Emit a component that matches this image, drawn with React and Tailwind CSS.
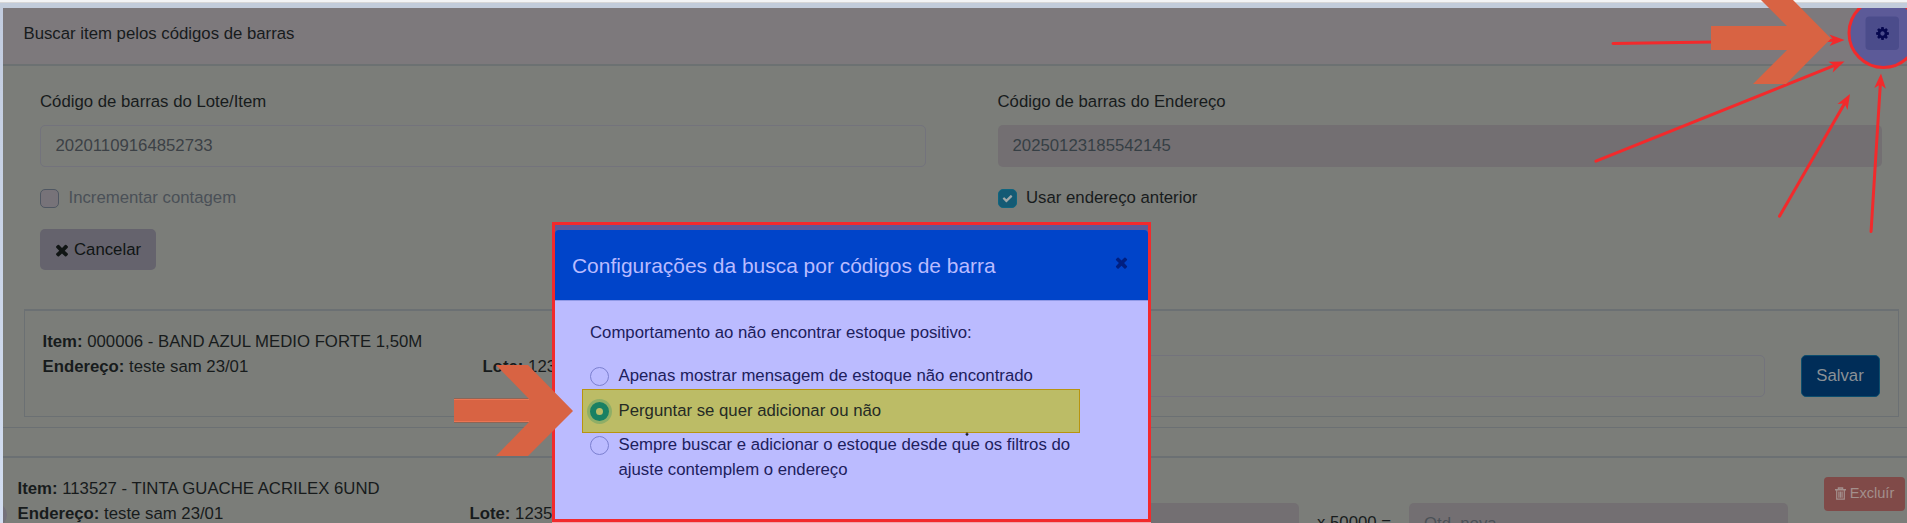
import React from 'react';

const ICONS = {
  times: 'M1490 1322q0 40-28 68l-136 136q-28 28-68 28t-68-28l-294-294-294 294q-28 28-68 28t-68-28l-136-136q-28-28-28-68t28-68l294-294-294-294q-28-28-28-68t28-68l136-136q28-28 68-28t68 28l294 294 294-294q28-28 68-28t68 28l136 136q28 28 28 68t-28 68l-294 294 294 294q28 28 28 68z',
  check: 'M1671 566q0 40-28 68l-724 724-136 136q-28 28-68 28t-68-28l-136-136-362-362q-28-28-28-68t28-68l136-136q28-28 68-28t68 28l294 295 656-657q28-28 68-28t68 28l136 136q28 28 28 68z',
  cog: 'M1152 896q0-106-75-181t-181-75-181 75-75 181 75 181 181 75 181-75 75-181zm512-109v222q0 12-8 23t-20 13l-185 28q-19 54-39 91 35 50 107 138 10 12 10 25t-9 23q-27 37-99 108t-94 71q-12 0-26-9l-138-108q-44 23-91 38-16 136-29 186-7 28-36 28h-222q-14 0-24.5-8.5t-11.5-21.5l-28-184q-49-16-90-37l-141 107q-10 9-25 9-14 0-25-11-126-114-165-168-7-10-7-23 0-12 8-23 15-21 51-66.5t54-70.5q-27-50-41-99l-183-27q-13-2-21-12.5t-8-23.5v-222q0-12 8-23t19-13l186-28q14-46 39-92-40-57-107-138-10-12-10-24 0-10 9-23 26-36 98.5-107.5t94.5-71.5q13 0 26 10l138 107q44-23 91-38 16-136 29-186 7-28 36-28h222q14 0 24.5 8.5t11.5 21.5l28 184q49 16 90 37l142-107q9-9 24-9 13 0 25 10 129 119 165 170 7 8 7 22 0 12-8 23-15 21-51 66.5t-54 70.5q26 50 41 98l183 28q13 2 21 12.5t8 23.5z',
};

const Icon = ({ name, className }) => (
  <svg viewBox="0 0 1792 1792" fill="currentColor" className={className}>
    <path d={ICONS[name]} />
  </svg>
);

const TrashIcon = ({ className }) => (
  <svg viewBox="0 0 11 13" fill="none" stroke="currentColor" className={className}>
    <path d="M0 2.7H11M3.5 2.5V1H7.5V2.5" strokeWidth="1.5" />
    <path d="M1.7 3V12.2H9.3V3M3.9 4.5V10.8M5.5 4.5V10.8M7.1 4.5V10.8" strokeWidth="1.2" />
  </svg>
);

const OPTIONS = [
  { label: 'Apenas mostrar mensagem de estoque não encontrado' },
  { label: 'Perguntar se quer adicionar ou não', checked: true },
  { label: 'Sempre buscar e adicionar o estoque desde que os filtros do ajuste contemplem o endereço' },
];

// Thin pointers around the settings button: [x1, y1, x2, y2]
const POINTERS = [
  [1612, 43.5, 1844.5, 40],
  [1595, 161.5, 1844.5, 61.5],
  [1779, 217, 1850, 94],
  [1871, 232.5, 1881, 73.5],
];

const Pointer = ({ x1, y1, x2, y2 }) => {
  const len = Math.hypot(x2 - x1, y2 - y1);
  const angle = (Math.atan2(y2 - y1, x2 - x1) * 180) / Math.PI;
  return (
    <g transform={`translate(${x2} ${y2}) rotate(${angle})`}>
      <line x1={-len + 1} y1="0" x2="-10" y2="0" stroke="#f22a2c" strokeWidth="3" strokeLinecap="round" />
      <path d="M0 0L-15 -5.8L-11 0L-15 5.8Z" fill="#f22a2c" />
    </g>
  );
};

const ItemInfo = ({ item, lote, className, addressClass }) => (
  <div className={className}>
    <p><b>Item:</b> {item}</p>
    <div className="flex">
      <p className={addressClass}><b>Endereço:</b> teste sam 23/01</p>
      <p><b>Lote:</b> {lote}</p>
    </div>
  </div>
);

const SearchForm = () => (
  <div className="grid h-[243px] grid-cols-[886px_884px] gap-x-[71.5px] content-start pl-[37px] pt-[23px]">
    <div>
      <p className="h-[36px]">Código de barras do Lote/Item</p>
      <div className="flex h-[42px] items-center rounded-[5px] border border-[#73737c] pb-[2px] pl-[14.5px] text-[#3c4146]">
        20201109164852733
      </div>
      <div className="mt-[18px] flex h-[25px] items-center">
        <span className="mt-px size-[19px] rounded-[5px] border border-[#4f5762] bg-[#777379]" />
        <span className="ml-[9.5px] text-[#4a5057]">Incrementar contagem</span>
      </div>
      <button className="mt-[19px] flex h-[41px] w-[116px] items-center rounded-[5px] bg-[#65636d] pb-px pl-[13px] text-[#101514]">
        <Icon name="times" className="mt-[2px] size-[18px]" />
        <span className="ml-[3px]">Cancelar</span>
      </button>
    </div>
    <div>
      <p className="h-[36px]">Código de barras do Endereço</p>
      <div className="flex h-[42px] items-center rounded-[5px] bg-[#736f72] pb-[2px] pl-[15px] text-[#363f45]">
        20250123185542145
      </div>
      <div className="mt-[18px] flex h-[25px] items-center">
        <span className="mt-px flex size-[19px] items-center justify-center rounded-[5px] border border-[#0f657f] bg-[#145a74]">
          <Icon name="check" className="size-[11px] text-[#a0a7a8]" />
        </span>
        <span className="ml-[9.5px]">Usar endereço anterior</span>
      </div>
    </div>
  </div>
);

const ConfigModal = () => (
  <div className="absolute left-[552px] top-[222px] flex h-[300px] w-[599px] flex-col border-3 border-[#f22a2c] bg-[#5c5a98] pt-[5px] text-[#20205c] shadow-[0_1px_0_#f0a6ad]">
    <div className="flex h-[70px] shrink-0 items-center justify-between rounded-t-[4px] bg-[#0044c9] pl-[17px] pr-[18px]">
      <h2 className="mt-px text-[20.95px] leading-[30px] text-[#b9bbff] whitespace-nowrap">
        Configurações da busca por códigos de barra
      </h2>
      <Icon name="times" className="mb-[6px] size-[17px] text-[#001f80]" />
    </div>
    <div className="flex-1 border-t border-[#8f99e6] bg-[#bbbbff] pl-[35px] pt-[19px]">
      <p>Comportamento ao não encontrar estoque positivo:</p>
      <div className="relative mt-[18px] space-y-[9.5px]">
        <div className="absolute -left-[8px] top-[26px] h-[44px] w-[498px] border border-[#b8940f] bg-[#bcbc66]" />
        {OPTIONS.map(({ label, checked }) => (
          <div key={label} className="relative flex items-start">
            {checked
              ? <span className="mt-[4px] size-[19px] shrink-0 rounded-full border-6 border-[#198063] bg-[#bcbc66] ring-3 ring-[#8fae66]" />
              : <span className="mt-[4px] size-[19px] shrink-0 rounded-full border border-[#7c80d0]" />}
            <span className={`ml-[9.5px] w-[465px] ${checked ? 'text-[#252b25]' : ''}`}>{label}</span>
          </div>
        ))}
      </div>
    </div>
  </div>
);

const App = () => (
  <div className="relative h-[523px] w-[1907px] overflow-hidden bg-[#7b7d79] font-['Liberation_Sans',Arial,sans-serif] text-[16.75px] leading-[25px] text-[#171b1c]">
    <div className="h-[8px] border-t-2 border-[#f3f4f6] bg-[#c2ccdb]">
      <div className="h-px bg-[#d7d7d8]" />
    </div>
    <div className="flex h-[515px]">
      <div className="w-[3px] shrink-0 bg-linear-to-b from-[#c2ccdf] to-[#d3def1]" />
      <div className="flex-1">
        <header className="flex h-[58px] items-center border-b-2 border-[#6c7172] bg-[#7d797c] pl-[20.5px]">
          <span className="mb-[5px]">Buscar item pelos códigos de barras</span>
        </header>

        <SearchForm />

        <section className="ml-[20.5px] mr-[8px] flex h-[107.5px] border border-t-2 border-[#6b7073]">
          <ItemInfo
            className="w-[1000px] pl-[18px] pt-[17.5px]"
            addressClass="w-[440px]"
            item="000006 - BAND AZUL MEDIO FORTE 1,50M"
            lote="1235"
          />
          <div className="mt-[44px] h-[42px] w-[740px] rounded-[5px] border border-[#73737c]" />
          <button className="ml-[36px] mt-[44px] h-[42px] w-[79px] rounded-[5px] border border-[#0c4d6d] bg-[#002d58] pb-[2px] text-[#8b9196]">
            Salvar
          </button>
        </section>

        <div className="mt-[10px] h-[31.5px] border-b-2 border-t border-[#6b7073]" />

        <section className="flex items-start">
          <ItemInfo
            className="w-[900px] shrink-0 pl-[14.5px] pt-[18px]"
            addressClass="w-[452px]"
            item="113527 - TINTA GUACHE ACRILEX 6UND"
            lote="1235"
          />
          <div className="mt-[45px] h-[42px] w-[396px] shrink-0 rounded-[5px] bg-[#736f72]" />
          <span className="mt-[52px] w-[110px] shrink-0 pl-[18px]">x 50000 =</span>
          <div className="mt-[45px] h-[42px] w-[379px] shrink-0 rounded-[5px] bg-[#736f72] pl-[15px] pt-[8px] text-[#4b5157]">
            Qtd. nova
          </div>
          <button className="ml-[36px] mt-[19px] flex h-[34px] w-[81px] shrink-0 items-center justify-center gap-[4px] rounded-[4px] bg-[#804a48] pb-px text-[14.6px] text-[#a38f8c]">
            <TrashIcon className="h-[13px] w-[11px]" />
            Excluír
          </button>
        </section>
      </div>
    </div>

    <ConfigModal />

    <svg className="absolute inset-0" width="1907" height="523" viewBox="0 0 1907 523">
      <defs>
        <clipPath id="panel">
          <rect x="3" y="8" width="1904" height="515" />
        </clipPath>
      </defs>
      <g clipPath="url(#panel)">
        <circle cx="-5" cy="515" r="12" fill="#74717a" />
        <circle cx="1883.5" cy="33" r="34.5" fill="#5c5a98" stroke="#f22a2c" strokeWidth="3" />
        <rect x="1865.5" y="16.5" width="33.5" height="33.5" rx="4" fill="#4b4c8b" />
      </g>
      {POINTERS.map(([x1, y1, x2, y2]) => (
        <Pointer key={x1} x1={x1} y1={y1} x2={x2} y2={y2} />
      ))}
      <path d="M1711 26H1787L1761 0H1793L1831 38.5L1786 84H1753L1787 50H1711Z" fill="#d86343" />
      <path d="M454 399H529L496 365H528L573 411L528 456H496L529 422H454Z" fill="#d86343" />
      <path d="M454 399.5H529M454 421.5H529" stroke="#ec7553" />
      <path d="M454 398.5H528M454 422.5H528" stroke="#8d6556" />
      <path d="M967 432.5V436M965.5 434.2H968.5" stroke="#000" />
    </svg>
    <Icon name="cog" className="absolute left-[1874.5px] top-[25.5px] size-[15px] text-[#07084f]" />
  </div>
);

export default App;
